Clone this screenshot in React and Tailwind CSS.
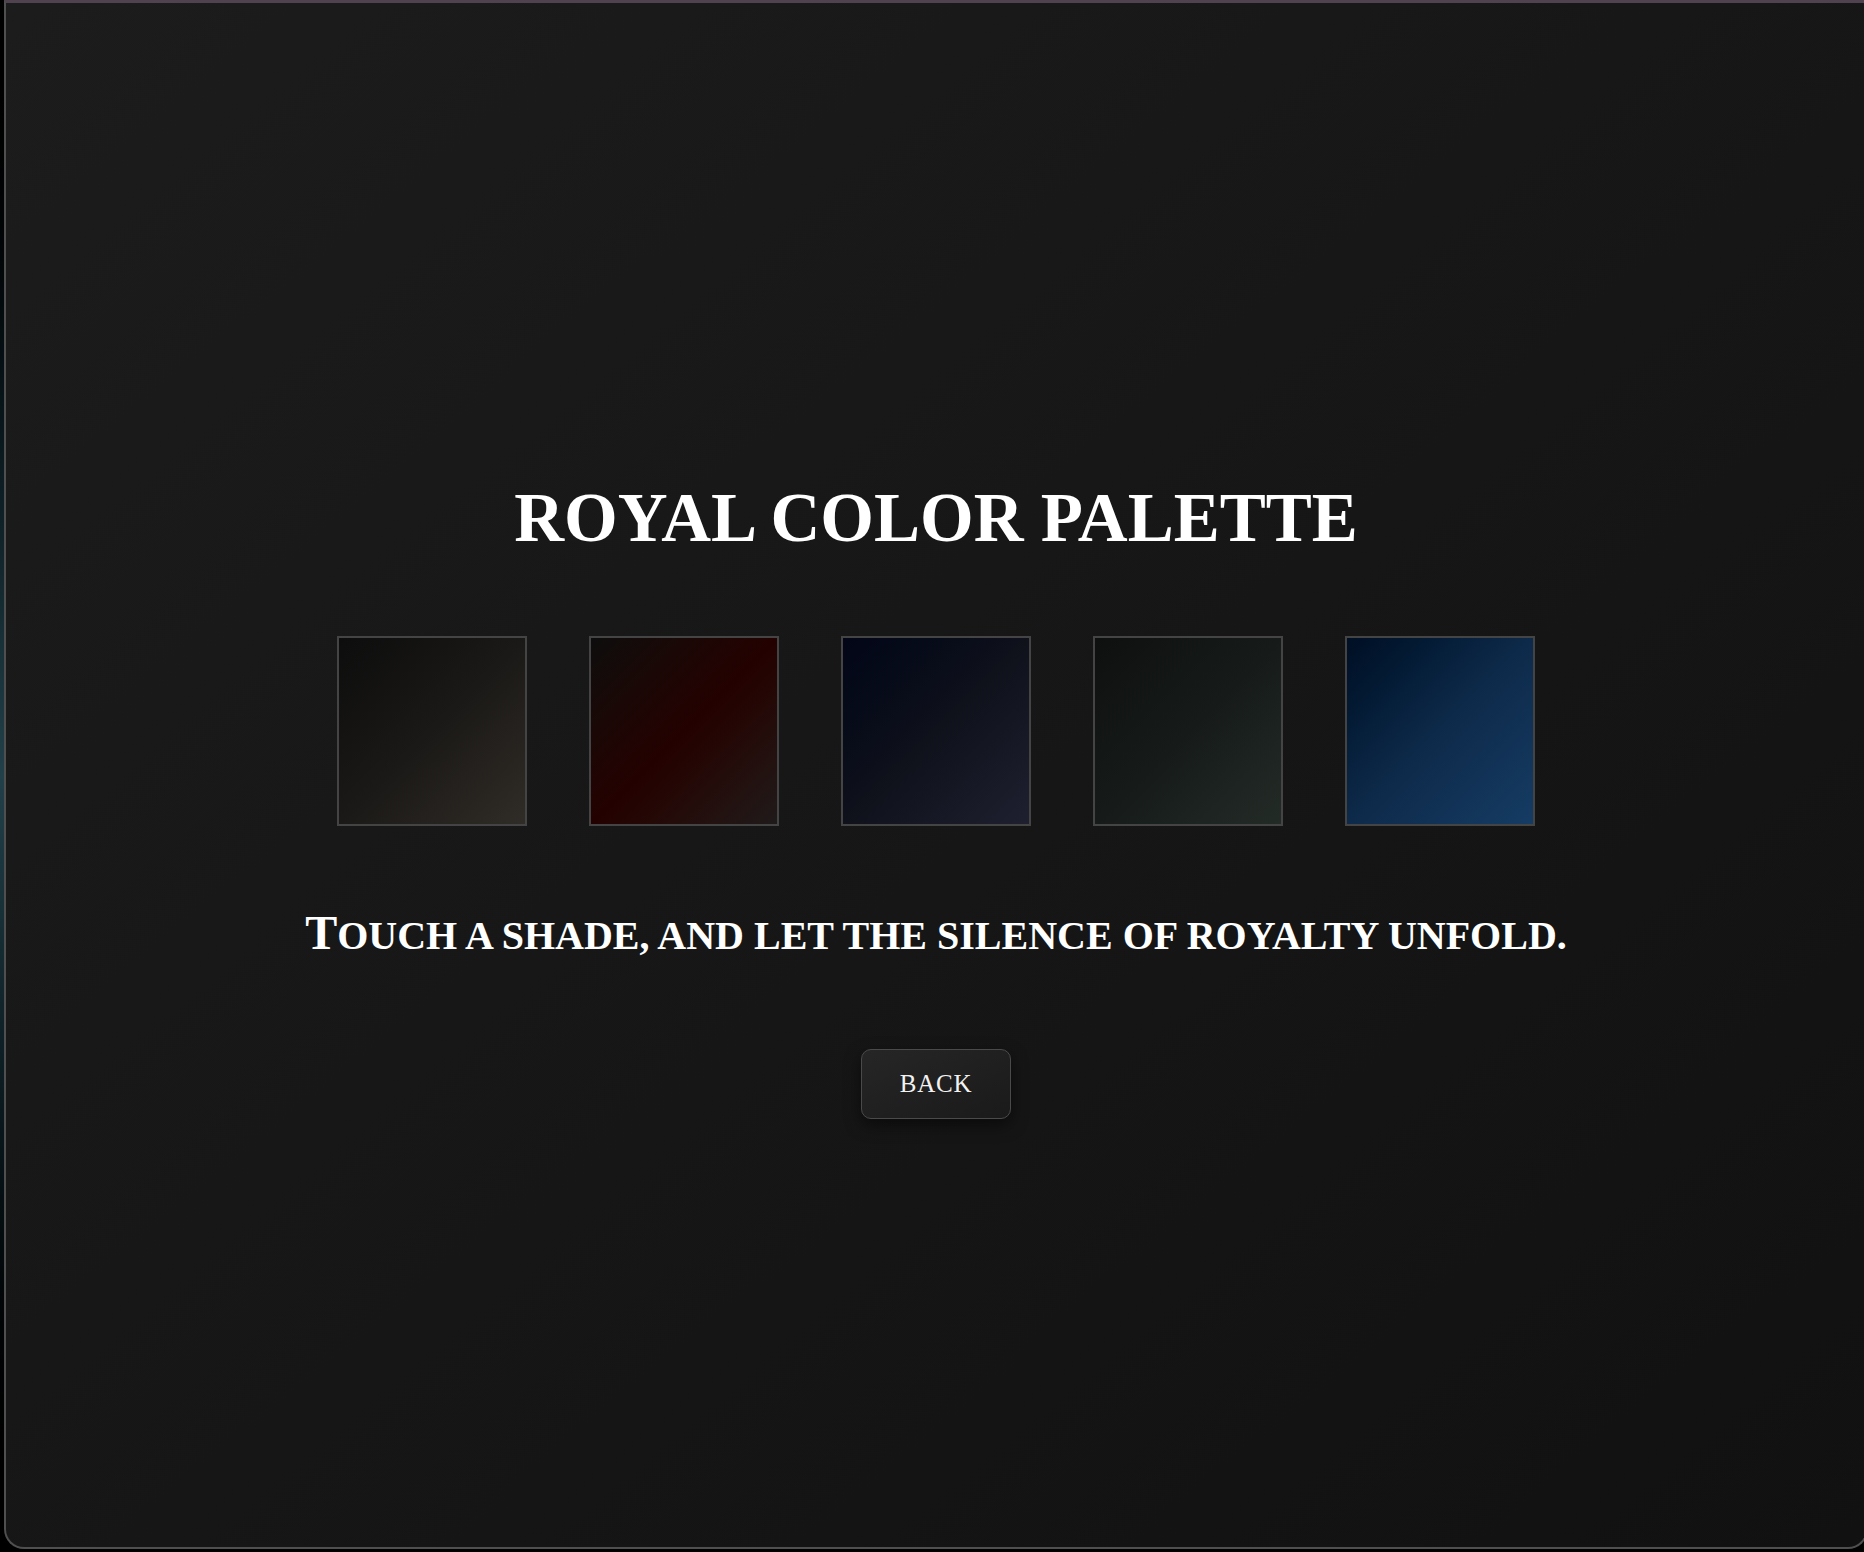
const swatches = [
  { name: "onyx", cls: "bg-linear-to-br from-[#0d0d0d] via-[#1b1917] to-[#302c27]" },
  { name: "crimson", cls: "bg-linear-to-br from-[#0d0d0d] via-[#240101] to-[#1f1a1a]" },
  { name: "midnight", cls: "bg-linear-to-br from-[#020617] via-[#0f111b] to-[#1e2030]" },
  { name: "forest", cls: "bg-linear-to-br from-[#0e100f] via-[#161b19] to-[#232b27]" },
  { name: "sapphire", cls: "bg-linear-to-br from-[#000f24] via-[#0e2a4a] to-[#153c64]" },
];

export default function App() {
  return (
    <div className="flex h-[1552px] w-full overflow-hidden bg-black">
      {/* sliver of whatever sits behind the window */}
      <div className="h-full w-[4px] shrink-0 bg-linear-to-b from-[#000000] via-[#22404a] to-[#000000]" />

      <main
        className="flex h-[1549px] w-[1864px] shrink-0 flex-col items-center rounded-b-[20px] border-x-2 border-b-2 border-t-[3px] border-x-[#4f4f4f] border-b-[#4f4f4f] border-t-[#51424f] bg-linear-to-br from-[#1c1c1c] to-[#111111] pt-[481px] text-white"
        style={{ fontFamily: '"Liberation Serif", "Times New Roman", serif' }}
      >
        <h1 className="text-[69px] font-bold uppercase leading-none">Royal Color Palette</h1>

        <section className="mt-[83px] flex gap-[62px]">
          {swatches.map((s) => (
            <button
              key={s.name}
              title={s.name}
              className={`h-[190px] w-[190px] border-2 border-[#444444] ${s.cls}`}
            />
          ))}
        </section>

        <p className="mt-[83px] text-[40px] font-bold uppercase leading-[47px] first-letter:text-[48px]">
          Touch a shade, and let the silence of royalty unfold.
        </p>

        <button className="mt-[90px] h-[70px] w-[150px] rounded-[10px] border border-[#4a4a4a] bg-linear-to-br from-[#262626] to-[#1a1a1a] text-[25px] tracking-[0.8px] text-[#f2f2f2] shadow-[0_6px_16px_rgba(0,0,0,0.5)]">
          BACK
        </button>
      </main>
    </div>
  );
}
